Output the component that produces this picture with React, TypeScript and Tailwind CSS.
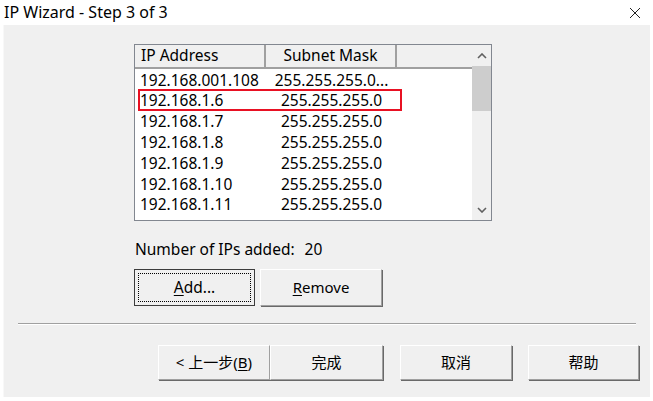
const FONT = "font-['Noto_Sans','Noto_Sans_CJK_SC',sans-serif]";

const ROWS: { ip: string; mask: string }[] = [
	{ ip: "192.168.001.108", mask: "255.255.255.0..." },
	{ ip: "192.168.1.6", mask: "255.255.255.0" },
	{ ip: "192.168.1.7", mask: "255.255.255.0" },
	{ ip: "192.168.1.8", mask: "255.255.255.0" },
	{ ip: "192.168.1.9", mask: "255.255.255.0" },
	{ ip: "192.168.1.10", mask: "255.255.255.0" },
	{ ip: "192.168.1.11", mask: "255.255.255.0" },
];

const btn3d =
	"bg-[#f0f0f0] border border-t-white border-l-white border-r-[#a0a0a0] border-b-[#a0a0a0] shadow-[1px_1px_0_#696969] flex items-center justify-center text-[15px] text-black";

export default function App() {
	return (
		<div className={`w-[653px] h-[401px] bg-white flex flex-col ${FONT} text-black`}>
			<div className="h-[25px] flex items-center justify-between pl-[4px] pr-[12px]">
				<span className="text-[16px] leading-none mt-[-2px]">IP Wizard - Step 3 of 3</span>
				<svg className="w-[12px] h-[12px]" viewBox="0 0 12 12" fill="none" stroke="#222" strokeWidth="1">
					<path d="M1 1l10 10M11 1L1 11" />
				</svg>
			</div>

			<div className="mx-[3px] h-[372px] bg-[#f0f0f0] border-l border-[#f8f8f8] flex flex-col">
				<div className="ml-[130px] mt-[19px] w-[358px] h-[177px] border border-[#828790] bg-white flex relative">
					<div className="flex-1 flex flex-col">
						<div className="h-[24px] flex bg-[#f0f0f0] border-b-2 border-[#a0a0a0] text-[15.5px]">
							<div className="w-[131px] border-r-2 border-[#a0a0a0] pl-[6px] flex items-center">IP Address</div>
							<div className="w-[131px] border-r-2 border-[#a0a0a0] flex items-center justify-center">Subnet Mask</div>
							<div className="flex-1" />
						</div>
						<div className="flex flex-col pt-[1px]">
							{ROWS.map((r) => (
								<div key={r.ip} className="h-[20.8px] flex items-center text-[15.5px] leading-none">
									<span className="w-[131px] pl-[5px] whitespace-nowrap">{r.ip}</span>
									<span className="w-[131px] text-center whitespace-nowrap">{r.mask}</span>
								</div>
							))}
						</div>
					</div>
					<div className="w-[19px] bg-[#f0f0f0] flex flex-col items-center">
						<svg className="w-[10px] h-[6px] mt-[8px]" viewBox="0 0 10 6" fill="none" stroke="#606060" strokeWidth="1.6">
							<path d="M1 5l4-4 4 4" />
						</svg>
						<div className="w-[19px] h-[45px] bg-[#cdcdcd] mt-[7px]" />
						<div className="flex-1" />
						<svg className="w-[10px] h-[6px] mb-[7px]" viewBox="0 0 10 6" fill="none" stroke="#606060" strokeWidth="1.6">
							<path d="M1 1l4 4 4-4" />
						</svg>
					</div>
					<div className="absolute left-[3px] top-[44px] w-[264px] h-[22px] border-2 border-[#e81123]" />
				</div>

				<div className="ml-[131px] mt-[19px] h-[20px] flex items-center text-[15.5px]">
					<span>Number of IPs added:</span>
					<span className="ml-[10px]">20</span>
				</div>

				<div className="ml-[130px] mt-[9px] flex gap-[5px]">
					<div className="w-[121px] h-[37px] border border-[#3c3c3c] bg-[#f0f0f0] p-[3px]">
						<div className="w-full h-full border border-dotted border-black flex items-center justify-center text-[15.5px]">
							<span>
								<span className="underline underline-offset-2">A</span>dd...
							</span>
						</div>
					</div>
					<div className={`w-[122px] h-[37px] ${btn3d} text-[15.5px]`}>
						<span>
							<span className="underline underline-offset-2">R</span>emove
						</span>
					</div>
				</div>

				<div className="mx-[14px] mt-[17px] border-t border-[#a0a0a0] border-b border-b-white" />

				<div className="ml-[154px] mt-[20px] flex">
					<div className={`w-[112px] h-[35px] ${btn3d}`}>
						<span>
							&lt; 上一步(<span className="underline underline-offset-2">B</span>)
						</span>
					</div>
					<div className={`w-[113px] h-[35px] ${btn3d}`}>完成</div>
					<div className={`w-[112px] h-[35px] ml-[17px] ${btn3d}`}>取消</div>
					<div className={`w-[111px] h-[35px] ml-[16px] ${btn3d}`}>帮助</div>
				</div>
			</div>
		</div>
	);
}
